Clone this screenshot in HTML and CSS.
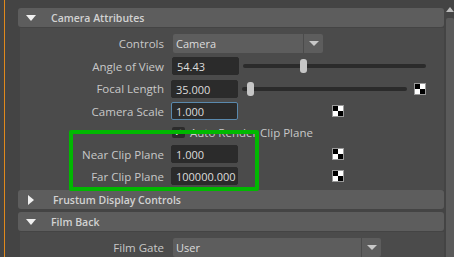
FILE: index.html
```html
<!DOCTYPE html>
<html lang="en">

<head>
    <meta charset="UTF-8">
    <title>Camera Attributes</title>
    <link rel="stylesheet" href="styles.css">
</head>

<body>
    <div class="gutter"></div>

    <div class="main">
        <div class="frame-header">
            <span class="arrow-down"></span>
            <span class="frame-title">Camera Attributes</span>
        </div>
        <div class="frame-body">
            <div class="row tall">
                <span class="label">Controls</span>
                <div class="dropdown controls-drop">
                    <span class="drop-value">Camera</span>
                    <span class="drop-btn"><span class="arrow-small"></span></span>
                </div>
            </div>
            <div class="row">
                <span class="label">Angle of View</span>
                <span class="field angle-field">54.43</span>
                <div class="slider angle-slider">
                    <span class="track"></span>
                    <span class="handle" style="left: 57px;"></span>
                </div>
            </div>
            <div class="row tall">
                <span class="label">Focal Length</span>
                <span class="field">35.000</span>
                <div class="slider focal-slider">
                    <span class="track"></span>
                    <span class="handle" style="left: 5px;"></span>
                </div>
                <span class="checker focal-checker"></span>
            </div>
            <div class="row">
                <span class="label">Camera Scale</span>
                <span class="field active">1.000</span>
                <span class="checker spaced"></span>
            </div>
            <div class="row check-row">
                <span class="label"></span>
                <span class="checkbox">&#10003;</span>
                <span class="check-label">Auto Render Clip Plane</span>
            </div>
            <div class="row">
                <span class="label">Near Clip Plane</span>
                <span class="field">1.000</span>
                <span class="checker spaced"></span>
            </div>
            <div class="row">
                <span class="label">Far Clip Plane</span>
                <span class="field">100000.000</span>
                <span class="checker spaced"></span>
            </div>
            <div class="highlight"></div>
        </div>

        <div class="frame-header closed">
            <span class="arrow-right"></span>
            <span class="frame-title">Frustum Display Controls</span>
        </div>

        <div class="frame-header">
            <span class="arrow-down"></span>
            <span class="frame-title">Film Back</span>
        </div>
        <div class="frame-body">
            <div class="row">
                <span class="label">Film Gate</span>
                <div class="dropdown gate-drop">
                    <span class="drop-value">User</span>
                    <span class="drop-btn"><span class="arrow-small"></span></span>
                </div>
            </div>
        </div>
    </div>

    <div class="scrollbar">
        <span class="scroll-up"></span>
        <span class="scroll-track"></span>
    </div>
</body>

</html>
```

FILE: styles.css
```css
body {
    margin: 0;
    width: 454px;
    height: 257px;
    overflow: hidden;
    background: #444444;
    display: flex;
    font-family: "Open Sans", "DejaVu Sans", sans-serif;
    font-size: 11px;
    color: #c8c8c8;
}

.gutter {
    width: 13px;
    margin-left: 4px;
    border-left: 1px solid #e0891c;
}

.main {
    width: 426px;
    padding-top: 8px;
}

.frame-header {
    height: 19px;
    background: #5d5d5d;
    border-radius: 3px;
    display: flex;
    align-items: center;
    margin-bottom: 1px;
}

.frame-header.closed {
    margin-bottom: 3px;
}

.frame-title {
    font-size: 10.5px;
    font-weight: 600;
    color: #d2d2d2;
    margin-left: 15px;
}

.arrow-down {
    width: 0;
    height: 0;
    margin-left: 8px;
    border-left: 5px solid transparent;
    border-right: 5px solid transparent;
    border-top: 6px solid #f0f0f0;
}

.arrow-right {
    width: 0;
    height: 0;
    margin-left: 10px;
    margin-right: 4px;
    border-top: 5px solid transparent;
    border-bottom: 5px solid transparent;
    border-left: 6px solid #f0f0f0;
}

.frame-body {
    position: relative;
    margin-left: 2px;
    background: #4b4b4b;
    padding: 4px 0 3px;
}

.row {
    display: flex;
    align-items: center;
    height: 22px;
}

.row.tall {
    height: 23px;
}

.label {
    width: 144px;
    text-align: right;
    margin-right: 7px;
    flex-shrink: 0;
    font-size: 11.5px;
}

.field {
    width: 67px;
    height: 18px;
    line-height: 17px;
    box-sizing: border-box;
    padding-left: 4px;
    background: #2b2b2b;
    border-radius: 2px;
    color: #dcdcdc;
    border: 1px solid #2b2b2b;
}

.field.active {
    border-color: #5a89ad;
}

.angle-field {
    margin-left: 1px;
}

.dropdown {
    display: flex;
    height: 19px;
    margin-left: 2px;
}

.drop-value {
    background: #5d5d5d;
    border-radius: 2px 0 0 2px;
    padding-left: 3px;
    line-height: 19px;
    color: #dcdcdc;
    flex: 1;
}

.drop-btn {
    width: 19px;
    margin-left: 1px;
    background: #5d5d5d;
    border-radius: 0 2px 2px 0;
    display: flex;
    align-items: center;
    justify-content: center;
}

.arrow-small {
    width: 0;
    height: 0;
    border-left: 5px solid transparent;
    border-right: 5px solid transparent;
    border-top: 5px solid #c8c8c8;
}

.controls-drop {
    width: 150px;
}

.gate-drop {
    width: 208px;
}

.slider {
    position: relative;
    height: 14px;
    margin-left: 4px;
}

.track {
    display: block;
    margin-top: 5px;
    height: 4px;
    background: #2b2b2b;
    border-radius: 2px;
}

.handle {
    position: absolute;
    top: 0;
    width: 7px;
    height: 14px;
    background: #c6c6c6;
    border-radius: 3px;
}

.angle-slider {
    width: 183px;
}

.focal-slider {
    width: 165px;
}

.checker {
    width: 10px;
    height: 10px;
    border: 1px solid #9a9a9a;
    background:
        linear-gradient(#000, #000) left top / 5px 5px no-repeat,
        linear-gradient(#000, #000) right bottom / 5px 5px no-repeat,
        #ffffff;
}

.focal-checker {
    margin-left: 7px;
}

.checker.spaced {
    margin-left: 94px;
}

.check-row {
    height: 21px;
}

.checkbox {
    width: 13px;
    height: 11px;
    margin-left: 1px;
    background: #2b2b2b;
    border-radius: 2px;
    color: #e0e0e0;
    font-size: 10px;
    line-height: 11px;
    text-align: center;
}

.check-label {
    margin-left: 5px;
    font-size: 11.5px;
}

.highlight {
    position: absolute;
    left: 49px;
    top: 102px;
    width: 182px;
    height: 53px;
    border: 4px solid #00b800;
    border-radius: 2px;
}

.scrollbar {
    width: 8px;
    margin-left: 2px;
    padding-top: 7px;
    display: flex;
    flex-direction: column;
    align-items: center;
}

.scroll-up {
    width: 0;
    height: 0;
    border-left: 4px solid transparent;
    border-right: 4px solid transparent;
    border-bottom: 5px solid #bdbdbd;
}

.scroll-track {
    margin-top: 6px;
    width: 8px;
    flex: 1;
    background: #5a5a5a;
    border-radius: 2px 2px 0 0;
}
```
